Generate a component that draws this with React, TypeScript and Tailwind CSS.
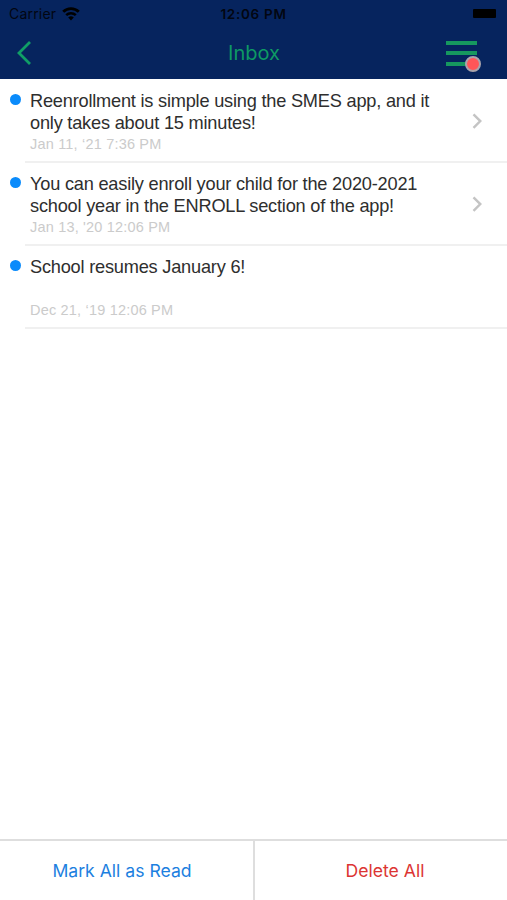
import { clsx } from "clsx";

type Message = {
  id: number;
  lines: string[];
  date: string;
  hasDetail: boolean;
};

const messages: Message[] = [
  {
    id: 1,
    lines: [
      "Reenrollment is simple using the SMES app, and it",
      "only takes about 15 minutes!",
    ],
    date: "Jan 11, ‘21 7:36 PM",
    hasDetail: true,
  },
  {
    id: 2,
    lines: [
      "You can easily enroll your child for the 2020-2021",
      "school year in the ENROLL section of the app!",
    ],
    date: "Jan 13, '20 12:06 PM",
    hasDetail: true,
  },
  {
    id: 3,
    lines: ["School resumes January 6!"],
    date: "Dec 21, ‘19 12:06 PM",
    hasDetail: false,
  },
];

function WifiIcon() {
  return (
    <svg width="18" height="14" viewBox="0 0 18 14" fill="none">
      <path d="M1.2 4.8a11 11 0 0 1 15.6 0" stroke="#000" strokeWidth="2.8" />
      <path d="M4.2 8.2a6.8 6.8 0 0 1 9.6 0" stroke="#000" strokeWidth="2.5" />
      <path d="M9 13.6 6.2 10.6a4 4 0 0 1 5.6 0Z" fill="#000" />
    </svg>
  );
}

function StatusBar() {
  return (
    <div className="grid h-[27px] grid-cols-3 items-center pl-[9px] pr-[11px] text-[#020611]">
      <div className="flex items-center gap-[6px]">
        <span className="text-[14px] tracking-[0.2px]">Carrier</span>
        <WifiIcon />
      </div>
      <span className="pl-[2px] pt-px text-center text-[13.5px] font-semibold tracking-[0.7px]">
        12:06 PM
      </span>
      <div className="h-[9px] w-[23px] justify-self-end rounded-[1px] bg-black" />
    </div>
  );
}

function NavBar() {
  return (
    <div className="grid h-[52px] grid-cols-3 items-center pl-[16px] pr-[16px]">
      <button className="w-[32px]" aria-label="Back">
        <svg width="17" height="26" viewBox="0 0 17 26" fill="none">
          <path d="M14 2 3 13l11 11" stroke="#109e66" strokeWidth="2.8" />
        </svg>
      </button>
      <h1 className="pl-px text-center text-[20px] text-[#0e9a64]">Inbox</h1>
      <button
        className="relative mr-[14px] flex flex-col gap-[6.5px] justify-self-end"
        aria-label="Menu"
      >
        <span className="h-[4px] w-[31px] bg-[#16985f]" />
        <span className="h-[4px] w-[31px] bg-[#16985f]" />
        <span className="h-[4px] w-[31px] bg-[#16985f]" />
        <span className="absolute -right-[4px] top-[15px] size-[16px] rounded-full border-2 border-[#aaa4ab] bg-[#ff5658]" />
      </button>
    </div>
  );
}

function MessageRow({ message }: { message: Message }) {
  return (
    <li className="flex h-[83px]">
      <div className="w-[25px] shrink-0 pl-[10px] pt-[14px]">
        <div className="size-[11px] rounded-full bg-[#0a8bfb]" />
      </div>
      <div className="flex flex-1 items-center border-b-2 border-[#f0f0f0] pl-[5px] pr-[24px]">
        <div className="flex h-full flex-1 flex-col pt-[11px]">
          <div className="h-[42px] text-[18.2px] leading-[21.5px] tracking-[-0.21px] text-[#2e2e2e]">
            {message.lines.map((line) => (
              <p key={line} className="whitespace-nowrap">
                {line}
              </p>
            ))}
          </div>
          <p className="text-[14.5px] leading-[22px] tracking-[0.19px] text-[#cbcbcb]">
            {message.date}
          </p>
        </div>
        <svg
          width="12"
          height="18"
          viewBox="0 0 12 18"
          fill="none"
          className={clsx(!message.hasDetail && "hidden")}
        >
          <path d="m2.5 2.3 6.8 6.8-6.8 6.8" stroke="#c4c4c4" strokeWidth="2.4" />
        </svg>
      </div>
    </li>
  );
}

export default function App() {
  return (
    <div className="flex h-[900px] w-[507px] flex-col overflow-hidden bg-white font-['Inter','Liberation_Sans',sans-serif]">
      <header className="h-[79px] bg-[#06245e]">
        <StatusBar />
        <NavBar />
      </header>
      <ul className="flex-1 pt-px font-['Liberation_Sans',Arial,sans-serif]">
        {messages.map((message) => (
          <MessageRow key={message.id} message={message} />
        ))}
      </ul>
      <footer className="flex h-[61px] border-t-2 border-[#dedede] text-[17.6px]">
        <button className="w-[255px] border-r-2 border-[#dedede] pr-[9px] pt-px text-[#1c80e0]">
          Mark All as Read
        </button>
        <button className="flex-1 pl-[8px] pt-px text-[#dc3533]">
          Delete All
        </button>
      </footer>
    </div>
  );
}
